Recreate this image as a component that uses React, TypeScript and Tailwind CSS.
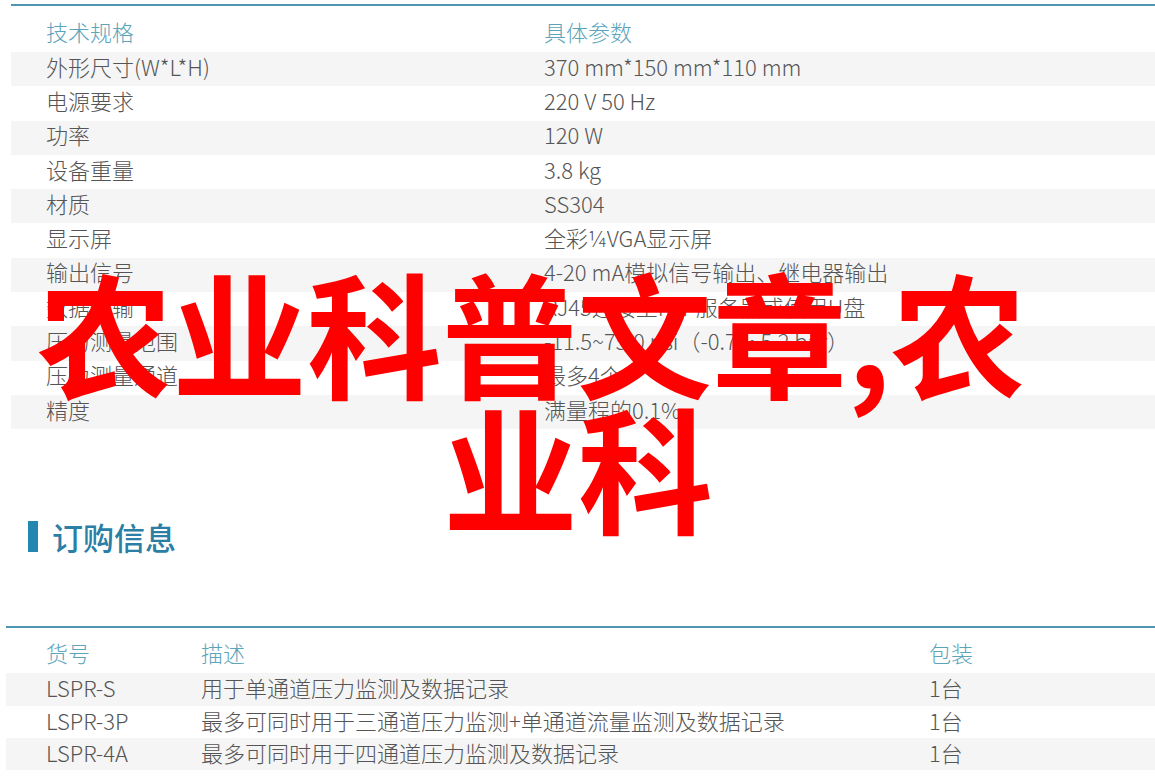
import React from 'react';

// spec rows for the top table
const specs: [string, string][] = [
    ['外形尺寸(W*L*H)', '370 mm*150 mm*110 mm'],
    ['电源要求', '220 V 50 Hz'],
    ['功率', '120 W'],
    ['设备重量', '3.8 kg'],
    ['材质', 'SS304'],
    ['显示屏', '全彩¼VGA显示屏'],
    ['输出信号', '4-20 mA模拟信号输出、继电器输出'],
    ['数据传输', 'RJ45连接至FTP服务器或使用U盘'],
    ['压力测量范围', '-11.5~75.0 psi（-0.79~5.2 bar）'],
    ['压力测量通道', '最多4个'],
    ['精度', '满量程的0.1%'],
];

const orders: [string, string, string][] = [
    ['LSPR-S', '用于单通道压力监测及数据记录', '1台'],
    ['LSPR-3P', '最多可同时用于三通道压力监测+单通道流量监测及数据记录', '1台'],
    ['LSPR-4A', '最多可同时用于四通道压力监测及数据记录', '1台'],
];

const App = () => {
    return (
        <div className="relative w-[1155px] h-[780px] overflow-hidden bg-white font-['Noto_Sans_CJK_SC','Noto_Sans',sans-serif] text-[22px] font-light text-[#555555]">
            {/* Spec table */}
            <div className="pt-[4px] pl-[11px]">
                <div className="border-t-2 border-[#4d97b0]">
                    <div className="flex h-[46px] items-center pt-[4px] text-[#5ba4ba]">
                        <div className="w-[533px] pl-[35px]">技术规格</div>
                        <div>具体参数</div>
                    </div>
                    {specs.map(([k, v], i) => (
                        <div
                            key={k}
                            className={`flex h-[34.3px] items-center pb-[7px] ${i % 2 === 0 ? 'bg-[#f5f5f5]' : 'bg-white'}`}
                        >
                            <div className="w-[533px] pl-[35px] leading-none">{k}</div>
                            <div className="leading-none">{v}</div>
                        </div>
                    ))}
                </div>
            </div>

            {/* Section heading */}
            <div className="mt-[92px] flex items-center pl-[28px]">
                <div className="h-[31px] w-[10px] bg-[#2586b0]"></div>
                <div className="ml-[14px] text-[31px] leading-none font-medium text-[#2b7ea5]">订购信息</div>
            </div>

            {/* Order table */}
            <div className="mt-[74px] pl-[6px]">
                <div className="border-t-2 border-[#4d97b0]">
                    <div className="flex h-[45px] items-center pt-[4px] text-[#5ba4ba]">
                        <div className="w-[195px] pl-[40px]">货号</div>
                        <div className="w-[728px]">描述</div>
                        <div>包装</div>
                    </div>
                    {orders.map(([code, desc, pack], i) => (
                        <div
                            key={code}
                            className={`flex h-[32.3px] items-center pb-[4px] ${i % 2 === 0 ? 'bg-[#f5f5f5]' : 'bg-white'}`}
                        >
                            <div className="w-[195px] pl-[40px] leading-none">{code}</div>
                            <div className="w-[728px] leading-none">{desc}</div>
                            <div className="leading-none">{pack}</div>
                        </div>
                    ))}
                </div>
            </div>

            {/* Red title overlay */}
            <div className="absolute left-0 top-[263px] w-full text-[135px] leading-[135px] font-bold text-[#ff0000] whitespace-nowrap">
                <div className="pl-[37px]">农业科普文章,农</div>
                <div className="pl-[443px]">业科</div>
            </div>
        </div>
    );
};

export default App;
